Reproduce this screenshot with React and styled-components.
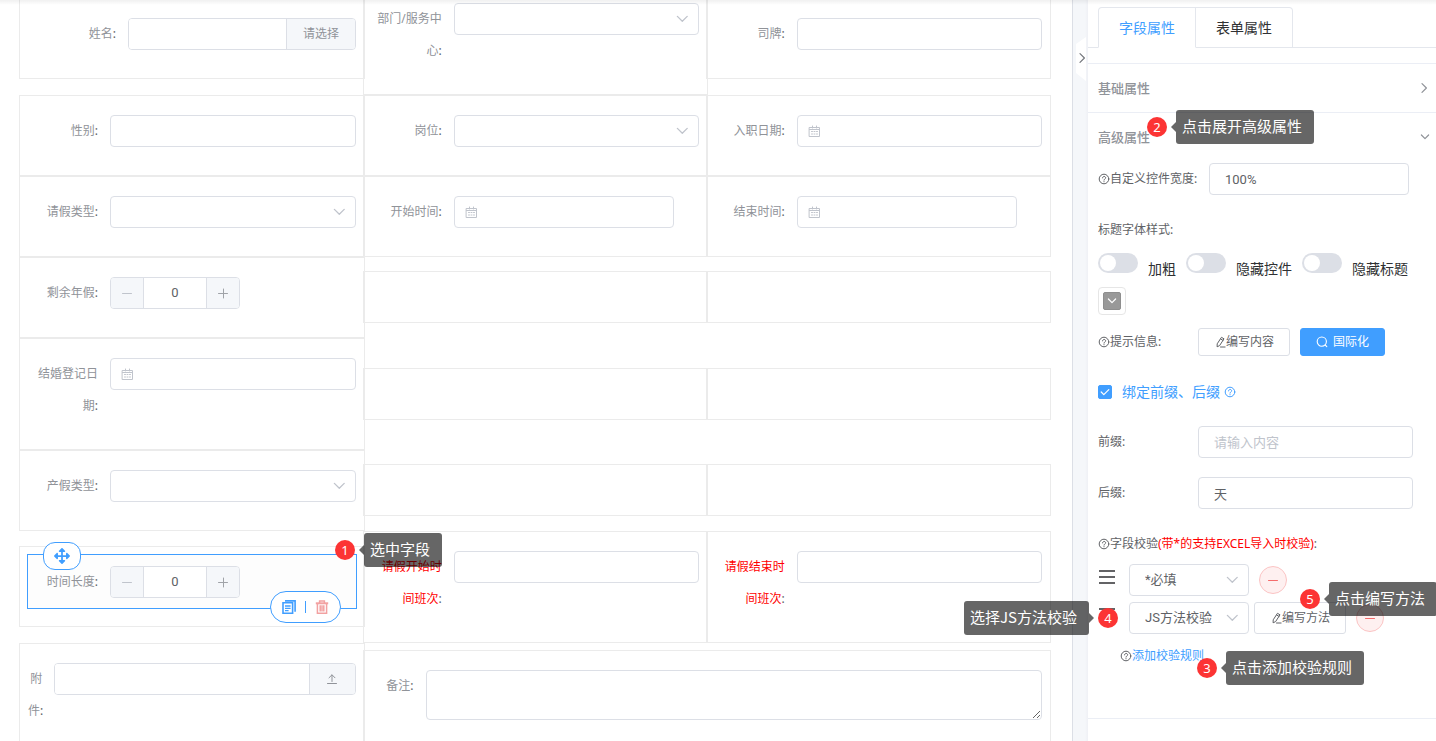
import React, { useState } from "react";
import styled, { createGlobalStyle, css } from "styled-components";
import { FaArrowsAlt } from "react-icons/fa";

const colors = {
  primary: "#409eff",
  border: "#dcdfe6",
  cell: "#ebebeb",
  line: "#ebeef5",
  tabLine: "#e4e7ed",
  muted: "#909399",
  text: "#606266",
  dark: "#303133",
  placeholder: "#c0c4cc",
  fill: "#f5f7fa",
  danger: "#f56c6c",
  step: "#fc3434",
};

const GlobalStyle = createGlobalStyle`
  * {
    box-sizing: border-box;
  }

  body {
    margin: 0;
    background: #fff;
    color: ${colors.text};
    font-family: "Noto Sans", "Noto Sans CJK SC", sans-serif;
    font-size: 12px;
  }

  button, input, select, textarea {
    margin: 0;
    color: ${colors.text};
    font-family: Roboto, "Noto Sans CJK SC", sans-serif;
    font-size: 13px;
    line-height: 16px;
  }

  button {
    font-family: "Noto Sans", "Noto Sans CJK SC", sans-serif;
  }
`;

/* ---------- page ---------- */

const Page = styled.div`
  position: relative;
  display: flex;
  height: 100vh;
  overflow: hidden;

  &:before {
    content: "";
    position: absolute;
    z-index: 5;
    top: 0;
    left: 0;
    right: 0;
    height: 5px;
    background: linear-gradient(rgba(0, 0, 0, 0.06), rgba(0, 0, 0, 0));
  }
`;

const Canvas = styled.main`
  flex: 1;
  min-width: 0;
  height: 100%;
  padding: 0 21px 0 19px;
  overflow: hidden;
  border-right: 1px solid ${colors.border};
`;

const Board = styled.div`
  display: flex;
  align-items: flex-start;
  margin-top: -17px;
`;

const LeftColumn = styled.div`
  flex: none;
  width: calc(100% / 3 + 2px);
  margin-right: -2px;
  padding-top: 15px;
`;

const RightColumns = styled.div`
  flex: 1;
  min-width: 0;
`;

const Pair = styled.div`
  display: grid;
  grid-template-columns: 1fr 1fr;
  align-items: start;
  margin-top: ${(props) => props.$space || 0}px;

  & > :first-child {
    margin-right: -1px;
  }
  & > :last-child {
    margin-left: -1px;
  }
`;

const Cell = styled.div`
  padding: 7px 7px ${(props) => (props.$tall ? 16 : 17)}px;
  margin-top: ${(props) => props.$space || 0}px;
  border: 1px solid ${colors.cell};
`;

const EmptyCell = styled.div`
  height: 52px;
  border: 1px solid ${colors.cell};
`;

const Field = styled.div`
  position: relative;
  display: flex;
  align-items: flex-start;
  padding: 11px 0 10px;
  border: 1px solid transparent;
  ${(props) =>
    props.$selected &&
    css`
      border-color: ${colors.primary};
      background: #fdfdfd;
    `}
`;

const FieldLabel = styled.label`
  flex: 0 0 ${(props) => props.$width || "25%"};
  min-width: 0;
  padding-right: 12px;
  line-height: 32px;
  text-align: right;
  word-break: break-all;
  color: ${colors.text};

  span {
    color: ${(props) => (props.$red ? "#ff0000" : colors.muted)};
  }
`;

/* ---------- controls ---------- */

const boxed = css`
  height: 32px;
  border: 1px solid ${colors.border};
  border-radius: 4px;
  background: #fff;
  outline: none;
`;

const TextInput = styled.input`
  ${boxed}
  flex: ${(props) => (props.$width ? "none" : 1)};
  width: ${(props) => props.$width || "100%"};
  min-width: 0;
  padding: 0 15px;

  &::placeholder {
    color: ${colors.placeholder};
  }
`;

const DateBox = styled(TextInput)`
  padding-left: 30px;
`;

const Wrap = styled.div`
  position: relative;
  display: flex;
  flex: ${(props) => (props.$width ? "none" : 1)};
  width: ${(props) => props.$width || "auto"};
  min-width: 0;
`;

const NativeSelect = styled.select`
  ${boxed}
  width: 100%;
  padding: 0 30px 0 15px;
  appearance: none;
`;

const SelectArrow = styled.span`
  position: absolute;
  right: 11px;
  top: 10px;
  display: flex;
  color: ${colors.placeholder};
  pointer-events: none;
`;

const DateIcon = styled.span`
  position: absolute;
  left: 11px;
  top: 10px;
  display: flex;
  color: ${colors.placeholder};
  pointer-events: none;
`;

const Group = styled.div`
  ${boxed}
  display: flex;
  flex: 1;
  min-width: 0;
  overflow: hidden;

  input {
    flex: 1;
    min-width: 0;
    padding: 0 15px;
    border: 0;
    outline: none;
  }
`;

const Append = styled.button`
  display: flex;
  align-items: center;
  justify-content: center;
  width: ${(props) => props.$width}px;
  padding: 0;
  border: 0;
  border-left: 1px solid ${colors.border};
  background: ${colors.fill};
  color: ${colors.muted};
  font-size: 12px;
`;

const NumberBox = styled.div`
  ${boxed}
  display: flex;
  width: 130px;
  overflow: hidden;

  input {
    flex: 1;
    min-width: 0;
    padding: 0;
    border: 0;
    outline: none;
    text-align: center;
  }
`;

const StepButton = styled.button`
  display: flex;
  align-items: center;
  justify-content: center;
  width: 33px;
  padding: 0;
  border: 0;
  border-${(props) => props.$side}: 1px solid ${colors.border};
  background: ${colors.fill};
  color: ${(props) => (props.$side === "right" ? colors.placeholder : "#a0a3a8")};
`;

const TextArea = styled.textarea`
  ${boxed}
  flex: 1;
  height: 50px;
  min-width: 0;
  padding: 5px 15px;
  resize: vertical;
`;

const MoveHandle = styled.button`
  position: absolute;
  left: 15px;
  top: -13px;
  display: flex;
  align-items: center;
  justify-content: center;
  width: 38px;
  height: 28px;
  padding: 0;
  border: 1px solid ${colors.primary};
  border-radius: 12px;
  background: #fff;
  color: ${colors.primary};
`;

const FieldActions = styled.div`
  position: absolute;
  right: 15px;
  bottom: -15px;
  display: flex;
  align-items: center;
  justify-content: center;
  gap: 9px;
  width: 71px;
  height: 32px;
  border: 1px solid ${colors.primary};
  border-radius: 16px;
  background: #fff;

  button {
    display: flex;
    padding: 0;
    border: 0;
    background: none;
  }
`;

const Divider = styled.span`
  width: 1px;
  height: 12px;
  background: ${colors.primary};
`;

/* ---------- gutter ---------- */

const Gutter = styled.div`
  width: 15px;
  padding: 37px 2px 0 3px;
  background: linear-gradient(to right, ${colors.fill} 80%, #eff0f5);
`;

const CollapseButton = styled.button`
  display: flex;
  align-items: center;
  justify-content: center;
  width: 10px;
  height: 44px;
  padding: 0 0 2px 2px;
  border: 0;
  background: #fff;
  color: #75787e;
  clip-path: polygon(0 7px, 100% 0, 100% 100%, 0 36px);

  svg {
    flex: none;
  }
`;

/* ---------- property panel ---------- */

const Panel = styled.aside`
  width: 348px;
  background: #fff;
`;

const Tabs = styled.div`
  display: flex;
  padding: 7px 10px 0;
  box-shadow: inset 0 -1px 0 ${colors.tabLine};
`;

const Tab = styled.button`
  height: 41px;
  padding: 0 20px;
  border: 1px solid ${colors.tabLine};
  border-bottom-color: ${(props) => (props.$active ? "#fff" : colors.tabLine)};
  border-radius: ${(props) => (props.$active ? "4px 0 0 0" : "0 4px 0 0")};
  background: #fff;
  color: ${(props) => (props.$active ? colors.primary : colors.dark)};
  font-size: 14px;

  & + & {
    border-left: 0;
  }
`;

const Collapse = styled.div`
  margin-top: 15px;
  border-top: 1px solid ${colors.line};
`;

const Section = styled.section`
  border-bottom: 1px solid ${colors.line};
`;

const SectionHead = styled.div`
  position: relative;
`;

const SectionButton = styled.button`
  display: flex;
  align-items: center;
  justify-content: space-between;
  width: 100%;
  height: 48px;
  padding: 0 6px 0 10px;
  border: 0;
  background: none;
  color: ${colors.muted};
  font-weight: 500;
`;

const SectionBody = styled.div`
  padding: 2px 23px 46px 10px;
`;

const Row = styled.div`
  position: relative;
  display: flex;
  align-items: center;
  min-height: 32px;
  margin-bottom: ${(props) => props.$space ?? 18}px;
`;

const RowLabel = styled.label`
  display: flex;
  align-items: center;
  width: ${(props) => props.$width || "auto"};
  line-height: 32px;
  white-space: nowrap;
`;

const Red = styled.span`
  color: #ff0000;
`;

const HelpLink = styled.a`
  display: flex;
  color: ${colors.primary};
`;

const SwitchRow = styled.div`
  display: flex;
  align-items: flex-start;
  gap: 10px;
  height: 32px;
  margin-bottom: 2px;
`;

const SwitchItem = styled.label`
  display: flex;
  gap: 10px;
  color: ${colors.dark};
  font-size: 14px;
  line-height: 32px;
  white-space: nowrap;
`;

const Switch = styled.input`
  position: relative;
  width: 40px;
  height: 20px;
  appearance: none;
  border-radius: 10px;
  background: ${colors.border};

  &:before {
    content: "";
    position: absolute;
    left: 2px;
    top: 2px;
    width: 16px;
    height: 16px;
    border-radius: 50%;
    background: #fff;
    transition: 0.3s all;
  }
  &:checked {
    background: ${colors.primary};
  }
  &:checked:before {
    left: 22px;
  }
`;

const ColorPicker = styled.button`
  display: flex;
  width: 28px;
  height: 28px;
  margin-bottom: 11px;
  padding: 4px;
  border: 1px solid #e6e6e6;
  border-radius: 4px;
  background: #fff;

  span {
    display: flex;
    align-items: center;
    justify-content: center;
    width: 18px;
    height: 18px;
    border: 1px solid #8e8e8e;
    border-radius: 2px;
    background: #999;
    color: #fff;
  }
`;

const Button = styled.button`
  display: flex;
  align-items: center;
  justify-content: center;
  gap: ${(props) => (props.$primary ? 5 : 0)}px;
  width: ${(props) => (props.$primary ? 85 : 92)}px;
  height: ${(props) => (props.$tall ? 32 : 28)}px;
  padding: 0;
  border: 1px solid ${(props) => (props.$primary ? colors.primary : colors.border)};
  border-radius: 3px;
  background: ${(props) => (props.$primary ? colors.primary : "#fff")};
  color: ${(props) => (props.$primary ? "#fff" : colors.text)};
  font-size: 12px;
`;

const ButtonRow = styled.div`
  display: flex;
  gap: 10px;
`;

const CheckLabel = styled.label`
  display: flex;
  align-items: center;
  gap: 10px;
  margin-right: 4px;
  color: ${colors.primary};
  font-size: 14px;
  line-height: 32px;
`;

const CheckWrap = styled.span`
  position: relative;
  display: flex;

  svg {
    position: absolute;
    left: 2px;
    top: 2px;
    color: #fff;
    pointer-events: none;
  }
`;

const Checkbox = styled.input`
  width: 14px;
  height: 14px;
  appearance: none;
  border: 1px solid ${colors.border};
  border-radius: 2px;

  &:checked {
    border-color: ${colors.primary};
    background: ${colors.primary};
  }
`;

const Rule = styled.div`
  position: relative;
  display: flex;
  align-items: center;
  margin-bottom: 6px;
`;

const DragHandle = styled.button`
  display: flex;
  width: 31px;
  padding: 0 0 6px 1px;
  border: 0;
  background: none;
  color: ${colors.dark};
`;

const RuleButton = styled(Button)`
  margin-left: 5px;
`;

const RemoveButton = styled.button`
  display: flex;
  align-items: center;
  justify-content: center;
  width: 28px;
  height: 28px;
  margin-left: 10px;
  padding: 0;
  border: 1px solid #fbc4c4;
  border-radius: 50%;
  background: #fef0f0;
  color: ${colors.danger};
`;

const AddRule = styled.div`
  position: relative;
  display: flex;
  align-items: center;
  height: 32px;
  padding-left: 22px;

  a {
    color: ${colors.primary};
    line-height: 32px;
    text-decoration: none;
  }
`;

/* ---------- step callouts ---------- */

const CalloutBox = styled.div`
  position: absolute;
  z-index: 10;
  top: ${(props) => props.$top};
  left: ${(props) => props.$left || "auto"};
  right: ${(props) => props.$right || "auto"};
  display: flex;
  flex-direction: ${(props) => (props.$right ? "row-reverse" : "row")};
  align-items: center;
  gap: 9px;
  pointer-events: none;
`;

const StepNumber = styled.span`
  width: 20px;
  height: 20px;
  border-radius: 50%;
  background: ${colors.step};
  color: #fff;
  font-size: 13px;
  line-height: 20px;
  text-align: center;
`;

const Bubble = styled.span`
  position: relative;
  height: 34px;
  padding: 0 12px 0 6px;
  border-radius: 3px;
  background: rgba(0, 0, 0, 0.6);
  color: #fff;
  font-family: "Noto Sans CJK SC", sans-serif;
  font-size: 15px;
  line-height: 32px;
  white-space: nowrap;

  &:before {
    content: "";
    position: absolute;
    top: 12px;
    border: 5px solid transparent;
    ${(props) =>
      props.$flip
        ? "left: 100%; border-right: 0; border-left-color: rgba(0, 0, 0, 0.6);"
        : "right: 100%; border-left: 0; border-right-color: rgba(0, 0, 0, 0.6);"}
  }
`;

const Callout = ({ step, children, ...place }) => (
  <CalloutBox {...place}>
    <StepNumber>{step}</StepNumber>
    <Bubble $flip={Boolean(place.$right)}>{children}</Bubble>
  </CalloutBox>
);

/* ---------- icons ---------- */

const Icon = ({ size = 12, width = 1, children }) => (
  <svg
    width={size}
    height={size}
    viewBox={`0 0 ${size} ${size}`}
    fill="none"
    stroke="currentColor"
    strokeWidth={width}
    strokeLinecap="round"
    strokeLinejoin="round"
    aria-hidden="true"
  >
    {children}
  </svg>
);

const ChevronDown = () => (
  <Icon width={1.3}>
    <path d="M1.4 3.4 6.3 8.2l4.9-4.8" />
  </Icon>
);
const SmallChevron = () => (
  <Icon size={10} width={1.2}>
    <path d="M1.4 3 5 6.6 8.6 3" />
  </Icon>
);
const ChevronRight = () => (
  <Icon width={1.2}>
    <path d="M4 1.6 8.4 6 4 10.4" />
  </Icon>
);
const Minus = () => (
  <Icon>
    <path d="M1.5 6.5h9" />
  </Icon>
);
const Plus = () => (
  <Icon>
    <path d="M1.5 6.5h9M6.5 2v9" />
  </Icon>
);
const Calendar = () => (
  <Icon>
    <path d="M1.5 2.5h10v9h-10zM1.5 4.5h10M4.5 1v2M8.5 1v2" />
    <path d="M3.5 6.5h1M6 6.5h1M8.5 6.5h1M3.5 9h1M6 9h1M8.5 9h1" />
  </Icon>
);
const Upload = () => (
  <Icon>
    <path d="M1.5 10.5h9M6 8.5V2M3 4.8 6 1.8l3 3" />
  </Icon>
);
const Question = () => (
  <Icon>
    <circle cx="6" cy="6" r="4.8" />
    <path d="M4.5 4.9c0-2 3.1-2 3.1-.1C7.6 6 6 6 6 7.1M6 8.6v.2" />
  </Icon>
);
const Pencil = () => (
  <Icon>
    <path d="M7.8 1.5 10 2.8 5.6 9.6l-2.5 1.2.1-2.6zM6.8 3.1 9 4.4M6.5 11h4.6" />
  </Icon>
);
const Search = () => (
  <Icon width={1.1}>
    <circle cx="5.8" cy="5.6" r="4.6" />
    <path d="m9.2 9 1.6 1.6" />
  </Icon>
);
const Check = () => (
  <Icon size={10} width={1.2}>
    <path d="m1.2 5 2.6 2.6 5-5" />
  </Icon>
);
const Bars = () => (
  <svg width="16" height="14" viewBox="0 0 16 14" stroke="currentColor" strokeWidth="1.5">
    <path d="M0 1h16M0 7h16M0 13h16" />
  </svg>
);
const Copy = () => (
  <svg width="14" height="14" viewBox="0 0 14 14" fill="none" stroke="#409eff" strokeWidth="1.6">
    <path d="M1 2.8h9.6v10.4H1zM3 .9h10.1v10.9" />
    <path d="M3 6h5.6M3 8.3h5.6M3 10.6h3.6" strokeWidth="1.3" />
  </svg>
);
const Trash = () => (
  <svg width="14" height="14" viewBox="0 0 14 14" fill="none" stroke="#f2a1a1" strokeWidth="1.5">
    <path d="M.8 3.3h12.4" strokeWidth="2" />
    <path d="M4.6 3V1h4.8v2M2.4 3.5v9.7h9.2V3.5M5.2 5.3v6.2M7 5.3v6.2M8.8 5.3v6.2" />
  </svg>
);

/* ---------- composed controls ---------- */

const FormField = ({ id, label, width, red, selected, children }) => (
  <Field $selected={selected}>
    <FieldLabel htmlFor={id} $width={width} $red={red}>
      <span>{label}</span>:
    </FieldLabel>
    {children}
  </Field>
);

const Select = ({ id, options = [""], width, label }) => (
  <Wrap $width={width}>
    <NativeSelect id={id} aria-label={label}>
      {options.map((option) => (
        <option key={option}>{option}</option>
      ))}
    </NativeSelect>
    <SelectArrow>
      <ChevronDown />
    </SelectArrow>
  </Wrap>
);

const DateInput = ({ id, width }) => (
  <Wrap $width={width}>
    <DateBox id={id} />
    <DateIcon>
      <Calendar />
    </DateIcon>
  </Wrap>
);

const NumberInput = ({ id }) => {
  const [value, setValue] = useState(0);

  return (
    <NumberBox>
      <StepButton $side="right" aria-label="-" onClick={() => setValue(Math.max(0, value - 1))}>
        <Minus />
      </StepButton>
      <input id={id} value={value} onChange={(event) => setValue(Number(event.target.value) || 0)} />
      <StepButton $side="left" aria-label="+" onClick={() => setValue(value + 1)}>
        <Plus />
      </StepButton>
    </NumberBox>
  );
};

/* ---------- form ---------- */

const FormCanvas = () => (
  <Canvas>
    <Board>
      <LeftColumn>
        <Cell>
          <FormField id="name" label="姓名" width="100px">
            <Group>
              <input id="name" />
              <Append $width={69}>请选择</Append>
            </Group>
          </FormField>
        </Cell>
        <Cell $space={16}>
          <FormField id="gender" label="性别">
            <TextInput id="gender" />
          </FormField>
        </Cell>
        <Cell>
          <FormField id="leaveType" label="请假类型">
            <Select id="leaveType" />
          </FormField>
        </Cell>
        <Cell>
          <FormField id="annual" label="剩余年假">
            <NumberInput id="annual" />
          </FormField>
        </Cell>
        <Cell $tall>
          <FormField id="marriage" label="结婚登记日期">
            <DateInput id="marriage" />
          </FormField>
        </Cell>
        <Cell>
          <FormField id="maternity" label="产假类型">
            <Select id="maternity" />
          </FormField>
        </Cell>
        <Cell $space={15}>
          <FormField id="duration" label="时间长度" selected>
            <NumberInput id="duration" />
            <MoveHandle aria-label="move">
              <FaArrowsAlt size={16} />
            </MoveHandle>
            <FieldActions>
              <button aria-label="copy">
                <Copy />
              </button>
              <Divider />
              <button aria-label="delete">
                <Trash />
              </button>
            </FieldActions>
            <Callout step={1} $top="-22px" $left="calc(100% - 21px)">
              选中字段
            </Callout>
          </FormField>
        </Cell>
        <Cell $tall $space={16}>
          <FormField id="file" label="附件" width="8%">
            <Group>
              <input id="file" />
              <Append $width={46} aria-label="upload">
                <Upload />
              </Append>
            </Group>
          </FormField>
        </Cell>
      </LeftColumn>

      <RightColumns>
        <Pair>
          <Cell $tall>
            <FormField id="dept" label="部门/服务中心">
              <Select id="dept" />
            </FormField>
          </Cell>
          <Cell $space={15}>
            <FormField id="company" label="司牌">
              <TextInput id="company" />
            </FormField>
          </Cell>
        </Pair>
        <Pair>
          <Cell>
            <FormField id="post" label="岗位">
              <Select id="post" />
            </FormField>
          </Cell>
          <Cell>
            <FormField id="entry" label="入职日期">
              <DateInput id="entry" />
            </FormField>
          </Cell>
        </Pair>
        <Pair>
          <Cell>
            <FormField id="start" label="开始时间">
              <DateInput id="start" width="220px" />
            </FormField>
          </Cell>
          <Cell>
            <FormField id="end" label="结束时间">
              <DateInput id="end" width="220px" />
            </FormField>
          </Cell>
        </Pair>
        {[14, 45, 44].map((space) => (
          <Pair key={space} $space={space}>
            <EmptyCell />
            <EmptyCell />
          </Pair>
        ))}
        <Pair $space={15}>
          <Cell $tall>
            <FormField id="startShift" label="请假开始时间班次" red>
              <TextInput id="startShift" />
            </FormField>
          </Cell>
          <Cell $tall>
            <FormField id="endShift" label="请假结束时间班次" red>
              <TextInput id="endShift" />
            </FormField>
          </Cell>
        </Pair>
        <Cell $space={7}>
          <FormField id="remark" label="备注" width="8%">
            <TextArea id="remark" />
          </FormField>
        </Cell>
      </RightColumns>
    </Board>
  </Canvas>
);

const PropertyPanel = () => (
  <Panel>
    <Tabs role="tablist">
      <Tab role="tab" $active>
        字段属性
      </Tab>
      <Tab role="tab">表单属性</Tab>
    </Tabs>
    <Collapse>
      <Section>
        <SectionButton>
          基础属性
          <ChevronRight />
        </SectionButton>
      </Section>
      <Section>
        <SectionHead>
          <SectionButton>
            高级属性
            <SmallChevron />
          </SectionButton>
          <Callout step={2} $top="-3px" $left="59px">
            点击展开高级属性
          </Callout>
        </SectionHead>
        <SectionBody>
          <Row>
            <RowLabel htmlFor="width" $width="111px">
              <Question />
              自定义控件宽度:
            </RowLabel>
            <TextInput id="width" $width="200px" defaultValue="100%" />
          </Row>
          <Row $space={8}>标题字体样式:</Row>
          <SwitchRow>
            {["加粗", "隐藏控件", "隐藏标题"].map((text) => (
              <SwitchItem key={text}>
                <Switch type="checkbox" role="switch" />
                {text}
              </SwitchItem>
            ))}
          </SwitchRow>
          <ColorPicker aria-label="color">
            <span>
              <SmallChevron />
            </span>
          </ColorPicker>
          <Row>
            <RowLabel as="span" $width="100px">
              <Question />
              提示信息:
            </RowLabel>
            <ButtonRow>
              <Button>
                <Pencil />
                编写内容
              </Button>
              <Button $primary>
                <Search />
                国际化
              </Button>
            </ButtonRow>
          </Row>
          <Row>
            <CheckLabel>
              <CheckWrap>
                <Checkbox type="checkbox" defaultChecked />
                <Check />
              </CheckWrap>
              绑定前缀、后缀
            </CheckLabel>
            <HelpLink href="#help">
              <Question />
            </HelpLink>
          </Row>
          <Row $space={19}>
            <RowLabel htmlFor="prefix" $width="100px">
              前缀:
            </RowLabel>
            <TextInput id="prefix" placeholder="请输入内容" />
          </Row>
          <Row $space={19}>
            <RowLabel htmlFor="suffix" $width="100px">
              后缀:
            </RowLabel>
            <TextInput id="suffix" defaultValue="天" />
          </Row>
          <Row $space={4}>
            <RowLabel as="span">
              <Question />
              字段校验<Red>(带*的支持EXCEL导入时校验)</Red>:
            </RowLabel>
          </Row>
          <Rule>
            <DragHandle aria-label="drag">
              <Bars />
            </DragHandle>
            <Select width="120px" label="rule" options={["*必填"]} />
            <RemoveButton aria-label="remove">
              <Minus />
            </RemoveButton>
          </Rule>
          <Rule>
            <DragHandle aria-label="drag">
              <Bars />
            </DragHandle>
            <Select width="120px" label="rule" options={["JS方法校验"]} />
            <RuleButton $tall>
              <Pencil />
              编写方法
            </RuleButton>
            <RemoveButton aria-label="remove">
              <Minus />
            </RemoveButton>
            <Callout step={4} $top="-1px" $right="calc(100% - 20px)">
              选择JS方法校验
            </Callout>
            <Callout step={5} $top="-20px" $left="202px">
              点击编写方法
            </Callout>
          </Rule>
          <AddRule>
            <Question />
            <a href="#add">添加校验规则</a>
            <Callout step={3} $top="11px" $left="99px">
              点击添加校验规则
            </Callout>
          </AddRule>
        </SectionBody>
      </Section>
    </Collapse>
  </Panel>
);

const App = () => (
  <>
    <GlobalStyle />
    <Page>
      <FormCanvas />
      <Gutter>
        <CollapseButton aria-label="collapse">
          <ChevronRight />
        </CollapseButton>
      </Gutter>
      <PropertyPanel />
    </Page>
  </>
);

export default App;
